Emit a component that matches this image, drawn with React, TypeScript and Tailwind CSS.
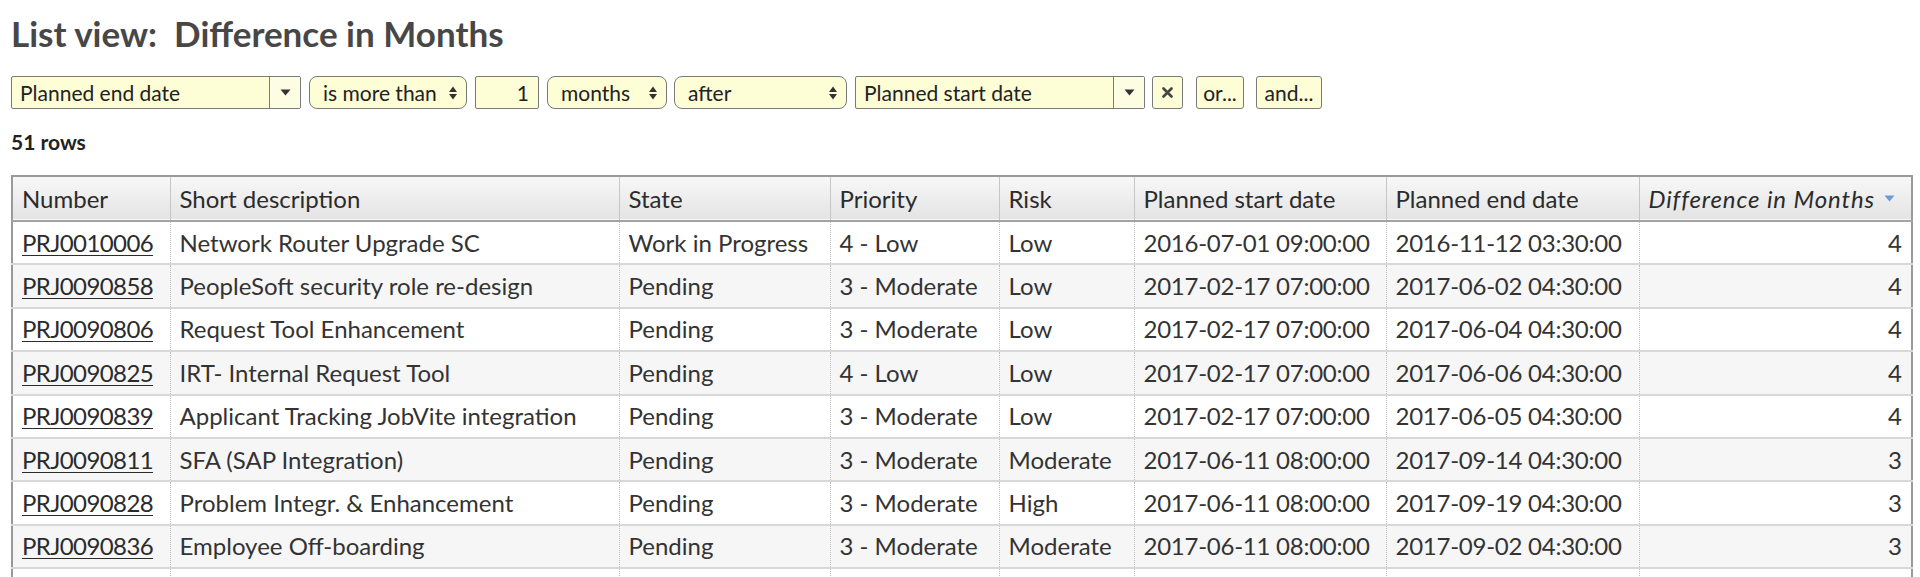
const rows = [
  ["PRJ0010006", "Network Router Upgrade SC", "Work in Progress", "4 - Low", "Low", "2016-07-01 09:00:00", "2016-11-12 03:30:00", "4"],
  ["PRJ0090858", "PeopleSoft security role re-design", "Pending", "3 - Moderate", "Low", "2017-02-17 07:00:00", "2017-06-02 04:30:00", "4"],
  ["PRJ0090806", "Request Tool Enhancement", "Pending", "3 - Moderate", "Low", "2017-02-17 07:00:00", "2017-06-04 04:30:00", "4"],
  ["PRJ0090825", "IRT- Internal Request Tool", "Pending", "4 - Low", "Low", "2017-02-17 07:00:00", "2017-06-06 04:30:00", "4"],
  ["PRJ0090839", "Applicant Tracking JobVite integration", "Pending", "3 - Moderate", "Low", "2017-02-17 07:00:00", "2017-06-05 04:30:00", "4"],
  ["PRJ0090811", "SFA (SAP Integration)", "Pending", "3 - Moderate", "Moderate", "2017-06-11 08:00:00", "2017-09-14 04:30:00", "3"],
  ["PRJ0090828", "Problem Integr. & Enhancement", "Pending", "3 - Moderate", "High", "2017-06-11 08:00:00", "2017-09-19 04:30:00", "3"],
  ["PRJ0090836", "Employee Off-boarding", "Pending", "3 - Moderate", "Moderate", "2017-06-11 08:00:00", "2017-09-02 04:30:00", "3"],
];

const columns = [
  { label: "Number", width: "w-[158px]" },
  { label: "Short description", width: "w-[449px]" },
  { label: "State", width: "w-[211px]" },
  { label: "Priority", width: "w-[169px]" },
  { label: "Risk", width: "w-[135px]" },
  { label: "Planned start date", width: "w-[252px]" },
  { label: "Planned end date", width: "w-[253px]" },
];

function UpDown() {
  return (
    <svg width="10" height="16" viewBox="0 0 10 16" className="shrink-0">
      <path d="M1 7 L5 1.5 L9 7 Z" fill="#333" />
      <path d="M1 9 L9 9 L5 14.5 Z" fill="#333" />
    </svg>
  );
}

function DownTri({ color = "#333" }: { color?: string }) {
  return (
    <svg width="11" height="7" viewBox="0 0 11 7">
      <path d="M0.5 0.5 L10.5 0.5 L5.5 6.5 Z" fill={color} />
    </svg>
  );
}

function Combo({ label, width }: { label: string; width: string }) {
  return (
    <div className={`flex h-[33px] ${width} rounded-[2px] border border-[#7a7a7a] bg-[#fdfdd6]`}>
      <div className="flex flex-1 items-center pl-[8px] text-[#222]">{label}</div>
      <div className="flex w-[31px] items-center justify-center border-l border-[#7a7a7a] bg-[#fdfde4]">
        <DownTri />
      </div>
    </div>
  );
}

function Select({ label, width }: { label: string; width: string }) {
  return (
    <div
      className={`flex h-[33px] ${width} items-center justify-between rounded-[8px] border border-[#7a7a7a] bg-[#fdfdd6] pl-[13px] pr-[8px] text-[#222]`}
    >
      <span>{label}</span>
      <UpDown />
    </div>
  );
}

function Button({ children, width }: { children: React.ReactNode; width: string }) {
  return (
    <div
      className={`flex h-[33px] ${width} items-center justify-center rounded-[3px] border border-[#7a7a7a] bg-[#fdfdd6] text-[#222]`}
    >
      {children}
    </div>
  );
}

export default function App() {
  return (
    <div className="h-screen overflow-hidden bg-white pl-[11px] font-['Lato','Liberation_Sans',sans-serif] text-[#333]">
      <h1 className="pt-[16px] text-[35px] leading-none font-bold text-[#474747]">
        List view:&nbsp; Difference in Months
      </h1>

      <div className="mt-[25px] flex items-center text-[21px] leading-none">
        <Combo label="Planned end date" width="w-[290px]" />
        <div className="ml-[8px]">
          <Select label="is more than" width="w-[158px]" />
        </div>
        <div className="ml-[8px] flex h-[33px] w-[64px] items-center justify-end rounded-[2px] border border-[#7a7a7a] bg-[#fdfdd6] pr-[9px] text-[#222]">
          1
        </div>
        <div className="ml-[8px]">
          <Select label="months" width="w-[120px]" />
        </div>
        <div className="ml-[7px]">
          <Select label="after" width="w-[173px]" />
        </div>
        <div className="ml-[8px]">
          <Combo label="Planned start date" width="w-[290px]" />
        </div>
        <div className="ml-[7px]">
          <Button width="w-[31px]">
            <svg width="11" height="11" viewBox="0 0 11 11">
              <path d="M1.5 1.5 L9.5 9.5 M9.5 1.5 L1.5 9.5" stroke="#444" strokeWidth="2.6" strokeLinecap="round" />
            </svg>
          </Button>
        </div>
        <div className="ml-[13px]">
          <Button width="w-[48px]">or...</Button>
        </div>
        <div className="ml-[12px]">
          <Button width="w-[66px]">and...</Button>
        </div>
      </div>

      <p className="mt-[22px] text-[21px] leading-none font-bold text-[#222]">51 rows</p>

      <table className="mt-[23px] w-[1902px] table-fixed border-collapse border-x-2 border-t-2 border-[#9a9a9a] text-[24px]">
        <colgroup>
          {columns.map((c) => (
            <col key={c.label} className={c.width} />
          ))}
          <col />
        </colgroup>
        <thead>
          <tr className="h-[45px] border-b-2 border-[#a3a3a3] bg-linear-to-b from-[#f8f8f8] to-[#e4e4e4]">
            {columns.map((c, i) => (
              <th
                key={c.label}
                className={`px-[9px] text-left font-normal text-[#2b2b2b] ${i > 0 ? "border-l border-[#c6c6c6]" : ""}`}
              >
                {c.label}
              </th>
            ))}
            <th className="border-l border-[#c6c6c6] px-[9px] text-left font-normal text-[#2b2b2b]">
              <span className="flex items-center gap-[9px]">
                <span className="italic tracking-[0.9px]">Difference in Months</span>
                <DownTri color="#6a9bd8" />
              </span>
            </th>
          </tr>
        </thead>
        <tbody>
          {rows.map((r, idx) => (
            <tr key={r[0]} className={`h-[43.4px] border-b-2 border-[#d8d8d8] ${idx % 2 === 1 ? "bg-[#f6f6f6]" : "bg-white"}`}>
              {r.map((cell, i) => (
                <td
                  key={i}
                  className={`whitespace-nowrap px-[9px] ${i > 0 ? "border-l border-dotted border-[#bdbdbd]" : ""} ${
                    i === 7 ? "text-right" : "text-left"
                  } ${i === 5 || i === 6 ? "tracking-[-0.25px]" : ""}`}
                >
                  {i === 0 ? (
                    <a href="#" className="underline decoration-1 underline-offset-[3px] tracking-[-0.6px] text-[#2b2b2b]">
                      {cell}
                    </a>
                  ) : (
                    cell
                  )}
                </td>
              ))}
            </tr>
          ))}
          <tr className="h-[43.4px] bg-white">
            {Array.from({ length: 8 }).map((_, i) => (
              <td key={i} className={i > 0 ? "border-l border-dotted border-[#bdbdbd]" : ""} />
            ))}
          </tr>
        </tbody>
      </table>
    </div>
  );
}
